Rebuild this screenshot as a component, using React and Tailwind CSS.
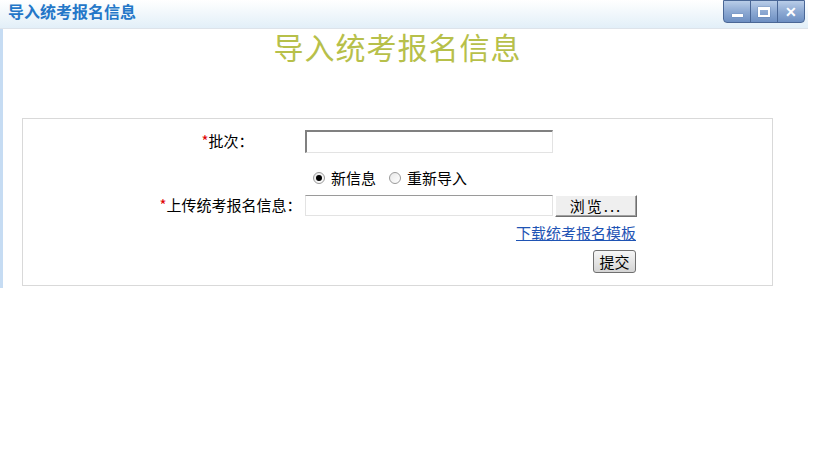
const cjk = { fontFamily: '"SimSun", "Noto Sans CJK SC", "Liberation Sans", sans-serif' };

const WinButton = ({ children, first, last }) => (
  <div
    className={`w-[28px] h-[23px] flex items-center justify-center border border-[#4a6796] bg-gradient-to-b from-[#b9cde8] via-[#8eaad3] to-[#6d8fc2] ${first ? 'rounded-bl-[4px]' : ''} ${last ? 'rounded-br-[4px]' : ''} ${first ? '' : '-ml-px'}`}
  >
    {children}
  </div>
);

const Radio = ({ checked }) => (
  <span className="w-[12px] h-[12px] rounded-full border border-[#9a9a9a] bg-gradient-to-br from-[#e8e8e8] to-white flex items-center justify-center">
    {checked && <span className="w-[6px] h-[6px] rounded-full bg-black" />}
  </span>
);

export default function App() {
  return (
    <div className="w-[819px] h-[460px] bg-white overflow-hidden" style={cjk}>
      {/* title bar */}
      <div className="w-[808px] h-[29px] flex items-start justify-between bg-gradient-to-b from-white to-[#e2eff8] border-b border-[#dde3ea]">
        <span className="pl-[8px] text-[16px] leading-[23px] font-bold text-[#2477c8]">导入统考报名信息</span>
        <div className="flex mr-[3px]">
          <WinButton first>
            <span className="w-[11px] h-[3px] bg-white mt-[7px] shadow-[0_0_1px_#3a5a8a]" />
          </WinButton>
          <WinButton>
            <span className="w-[12px] h-[10px] border-2 border-t-[3px] border-white shadow-[0_0_1px_#3a5a8a]" />
          </WinButton>
          <WinButton last>
            <span className="text-white font-bold text-[14px] leading-none" style={{ fontFamily: '"Liberation Sans", sans-serif' }}>✕</span>
          </WinButton>
        </div>
      </div>

      <div className="flex">
        <div className="w-[3px] h-[259px] bg-[#c6dcf3]" />
        <div className="pl-[19px]">
          <h1 className="w-[751px] h-[40px] text-center text-[30px] leading-[34px] font-normal text-[#b7c04a] tracking-[1px]">
            导入统考报名信息
          </h1>

          <div className="mt-[49px] w-[751px] h-[168px] border border-[#d9d9d9] pl-[127px] pt-[11px] text-[15px] text-black">
            <div className="flex items-center h-[23px]">
              <div className="w-[155px] text-center">
                <span className="text-[#e00000]">*</span>批次：
              </div>
              <div className="w-[248px] h-[23px] border-t-2 border-l-2 border-[#808080] border-b border-r border-b-[#e3e3e3] border-r-[#e3e3e3] bg-white" />
            </div>

            <div className="flex items-center h-[20px] mt-[15px]">
              <div className="w-[155px]" />
              <div className="flex items-center pl-[8px] gap-[6px]">
                <Radio checked />
                <span>新信息</span>
                <span className="w-[1px]" />
                <Radio />
                <span>重新导入</span>
              </div>
            </div>

            <div className="flex items-center h-[21px] mt-[7px]">
              <div className="w-[155px] text-center pl-[6px]">
                <span className="text-[#e00000]">*</span>上传统考报名信息：
              </div>
              <div className="w-[248px] h-[21px] border border-t-[#9a9a9a] border-l-[#e3e3e3] border-b-[#e3e3e3] border-r-[#e3e3e3] bg-white" />
              <button className="ml-[2px] w-[82px] h-[22px] bg-[#efefef] border border-t-white border-l-white border-b-[#6f6f6f] border-r-[#6f6f6f] shadow-[inset_-1px_-1px_0_#a0a0a0] text-[15px] leading-[18px] tracking-[2px]">
                浏览...
              </button>
            </div>

            <div className="flex h-[18px] mt-[6px]">
              <div className="w-[155px]" />
              <div className="w-[331px] text-right">
                <a href="#" className="text-[#1f54b4] underline leading-[18px]">下载统考报名模板</a>
              </div>
            </div>

            <div className="flex mt-[10px]">
              <div className="w-[155px]" />
              <div className="w-[331px] flex justify-end">
                <button className="w-[43px] h-[23px] rounded-[3px] border border-[#707070] bg-gradient-to-b from-[#f6f6f6] to-[#d4d4d4] text-[15px] leading-[20px]">
                  提交
                </button>
              </div>
            </div>
          </div>
        </div>
      </div>
    </div>
  );
}
